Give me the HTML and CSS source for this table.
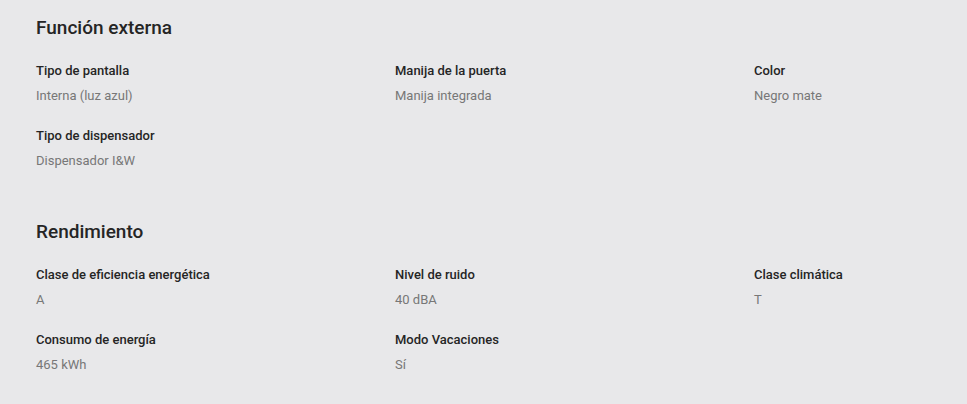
FILE: index.html
```html
<!DOCTYPE html>
<html lang="es">
<head>
<meta charset="utf-8">
<link rel="stylesheet" href="styles.css">
</head>
<body>
<div class="specs">
  <section class="group">
    <h2 class="group-title">Función externa</h2>
    <div class="grid">
      <div class="item"><div class="label">Tipo de pantalla</div><div class="value">Interna (luz azul)</div></div>
      <div class="item"><div class="label">Manija de la puerta</div><div class="value">Manija integrada</div></div>
      <div class="item"><div class="label">Color</div><div class="value">Negro mate</div></div>
      <div class="item"><div class="label">Tipo de dispensador</div><div class="value">Dispensador I&amp;W</div></div>
    </div>
  </section>
  <section class="group">
    <h2 class="group-title">Rendimiento</h2>
    <div class="grid">
      <div class="item"><div class="label">Clase de eficiencia energética</div><div class="value">A</div></div>
      <div class="item"><div class="label">Nivel de ruido</div><div class="value">40 dBA</div></div>
      <div class="item"><div class="label">Clase climática</div><div class="value">T</div></div>
      <div class="item"><div class="label">Consumo de energía</div><div class="value">465 kWh</div></div>
      <div class="item"><div class="label">Modo Vacaciones</div><div class="value">Sí</div></div>
    </div>
  </section>
</div>
</body>
</html>
```
FILE: styles.css
```css
html, body {
  margin: 0;
  padding: 0;
}
body {
  background: #e8e8ea;
  font-family: Roboto, "Liberation Sans", sans-serif;
  color: #222;
  overflow: hidden;
  width: 967px;
  height: 404px;
}
.specs {
  padding: 16px 0 0 36px;
}
.group {
  margin-bottom: 50px;
}
.group-title {
  margin: 0 0 22px;
  font-size: 19px;
  font-weight: 500;
  line-height: 24px;
  color: #252525;
}
.grid {
  display: grid;
  grid-template-columns: 359px 359px 1fr;
  row-gap: 22px;
}
.item {
  display: flex;
  flex-direction: column;
  gap: 7px;
}
.label {
  font-size: 13px;
  font-weight: 500;
  line-height: 18px;
  color: #252525;
}
.value {
  font-size: 13px;
  line-height: 18px;
  color: #777;
}
```
